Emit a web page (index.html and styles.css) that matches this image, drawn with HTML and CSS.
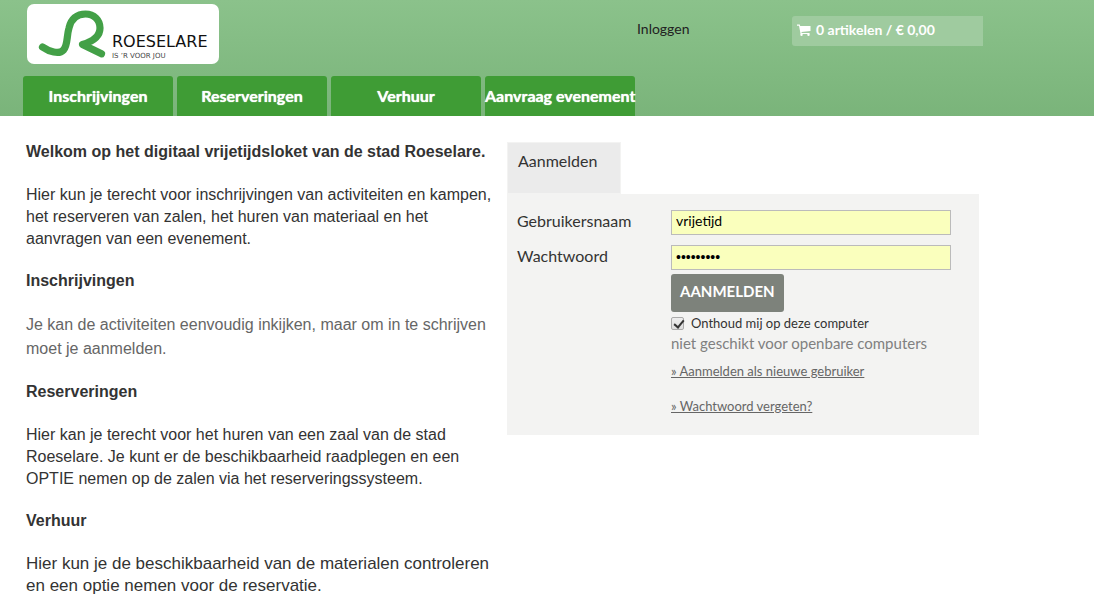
FILE: index.html
```html
<!DOCTYPE html>
<html lang="nl">
<head>
<meta charset="utf-8">
<meta name="viewport" content="width=device-width, initial-scale=1">
<title>Vrijetijdsloket Roeselare</title>
<link rel="stylesheet" href="styles.css">
</head>
<body>
<header class="header">
  <div class="topbar">
    <a class="logo" href="#" aria-label="Roeselare">
      <svg class="logo-svg" viewBox="0 0 192 60" width="192" height="60">
        <path d="M15.500 43C22 47.500 32 51 36.500 46C41 41 39.500 32 42 24C44 15 50 10 58.500 10C67 10 73 16 73 24C73 33 64 38 55.500 40.500L74.500 49.800" fill="none" stroke="#43a047" stroke-width="7.200" stroke-linecap="round" stroke-linejoin="round"/>
        <text class="logo-name" x="85" y="43">ROESELARE</text>
        <text class="logo-motto" x="85" y="54">IS ’R VOOR JOU</text>
      </svg>
    </a>
    <a class="login-link" href="#">Inloggen</a>
    <a class="cart" href="#">
      <svg class="cart-icon" viewBox="0 0 14 12" width="14" height="12">
        <path d="M0 .5h2.800l.4 1.500H13.500v5L4.500 8l.2.900H12.500v1H3.600L2 1.700H0z" fill="#fff"/>
        <circle cx="4.500" cy="10.800" r="1.200" fill="#fff"/>
        <circle cx="11.500" cy="10.800" r="1.200" fill="#fff"/>
      </svg>
      <span>0 artikelen / € 0,00</span>
    </a>
  </div>
  <nav class="nav">
    <a class="nav-item" href="#">Inschrijvingen</a>
    <a class="nav-item" href="#">Reserveringen</a>
    <a class="nav-item" href="#">Verhuur</a>
    <a class="nav-item" href="#">Aanvraag evenement</a>
  </nav>
</header>
<main class="main">
  <section class="intro">
    <h1 class="title">Welkom op het digitaal vrijetijdsloket van de stad Roeselare.</h1>
    <p class="text">Hier kun je terecht voor inschrijvingen van activiteiten en kampen, het reserveren van zalen, het huren van materiaal en het aanvragen van een evenement.</p>
    <h2 class="title">Inschrijvingen</h2>
    <p class="text text-muted">Je kan de activiteiten eenvoudig inkijken, maar om in te schrijven moet je aanmelden.</p>
    <h2 class="title">Reserveringen</h2>
    <p class="text">Hier kan je terecht voor het huren van een zaal van de stad Roeselare. Je kunt er de beschikbaarheid raadplegen en een OPTIE nemen op de zalen via het reserveringssysteem.</p>
    <h2 class="title">Verhuur</h2>
    <p class="text text-large">Hier kun je de beschikbaarheid van de materialen controleren en een optie nemen voor de reservatie.</p>
  </section>
  <section class="login">
    <h2 class="tab">Aanmelden</h2>
    <form class="panel">
      <label class="label" for="user">Gebruikersnaam</label>
      <input class="field" id="user" type="text" value="vrijetijd">
      <label class="label" for="pass">Wachtwoord</label>
      <input class="field field-password" id="pass" type="password" value="vrijetijd">
      <div class="actions">
        <button class="submit" type="button">AANMELDEN</button>
        <div class="remember">
          <input class="check" id="remember" type="checkbox" checked>
          <label for="remember">Onthoud mij op deze computer</label>
        </div>
        <p class="hint">niet geschikt voor openbare computers</p>
        <a class="link" href="#">» Aanmelden als nieuwe gebruiker</a>
        <a class="link" href="#">» Wachtwoord vergeten?</a>
      </div>
    </form>
  </section>
</main>
</body>
</html>
```

FILE: styles.css
```css
* { box-sizing: border-box; }

body {
  margin: 0;
  background: #fff;
  color: #333;
  font: 16px/22px Lato, sans-serif;
}

h1, h2, p { margin: 0; }

.header {
  padding: 4px 0 0 23px;
  background: linear-gradient(#8bc28b, #7ab47a);
}

.topbar {
  display: grid;
  grid-template-columns: 610px 155px minmax(150px, 191px);
  align-items: start;
  padding-left: 4px;
}

.logo {
  justify-self: start;
  display: block;
  background: #fff;
  border-radius: 7px;
}

.logo-svg { display: block; }
.logo-name { font: 16px "DejaVu Sans", sans-serif; fill: #111; }
.logo-motto { font: 7px "DejaVu Sans", sans-serif; fill: #444; }

.login-link {
  margin-top: 14px;
  color: #222;
  font-size: 14px;
  text-decoration: none;
}

.cart {
  display: flex;
  align-items: center;
  gap: 5px;
  margin-top: 12px;
  padding: 3px 5px 5px;
  border-radius: 3px 0 0 3px;
  background: #9fcb9f;
  color: #fff;
  font-size: 14px;
  font-weight: 700;
  text-decoration: none;
}

.nav {
  display: flex;
  gap: 4px;
  margin-top: 12px;
}

.nav-item {
  width: 150px;
  padding: 9px 0;
  border-radius: 3px 3px 0 0;
  background: #3f9c35;
  color: #fff;
  font-weight: 700;
  text-align: center;
  text-decoration: none;
  text-shadow: 0 0 1px #fff;
  white-space: nowrap;
}

.main {
  display: grid;
  grid-template-columns: minmax(0, 469px) minmax(0, 472px);
  gap: 12px;
  padding: 25px 26px 0;
}

.intro { font-family: "Liberation Sans", Arial, sans-serif; }

.title {
  margin-bottom: 21px;
  font-size: 16px;
  font-weight: 700;
}

.text { margin-bottom: 20px; }
.text:last-child { margin-bottom: 0; }
.text-muted { color: #666; line-height: 24px; }
.text-large { font-size: 17px; }

.login { padding-top: 1px; }

.tab {
  width: 114px;
  height: 52px;
  padding: 7px 10px;
  border: 1px solid #f3f3f2;
  background: #ebebeb;
  font-size: 16px;
  font-weight: 400;
}

.panel {
  display: grid;
  grid-template-columns: 144px minmax(0, 280px);
  column-gap: 10px;
  row-gap: 10px;
  padding: 16px 10px 18px;
  background: #f3f3f2;
}

.label { line-height: 22px; }

.field {
  width: 100%;
  height: 25px;
  padding: 0 4px 4px;
  border: 1px solid #bbb;
  border-radius: 0;
  background: #faffbd;
  color: #000;
  font: 14px Lato, sans-serif;
}

.field-password {
  padding-bottom: 1px;
  font-family: "Liberation Sans", Arial, sans-serif;
}

.actions {
  grid-column: 2;
  display: flex;
  flex-direction: column;
  align-items: flex-start;
  margin-top: -6px;
}

.submit {
  height: 38px;
  padding: 0 9px 4px;
  border: 0;
  border-radius: 3px;
  background: #7d827b;
  color: #fff;
  font: 700 15px Lato, sans-serif;
}

.remember {
  display: flex;
  align-items: center;
  gap: 7px;
  font-size: 13px;
}

.check {
  appearance: none;
  width: 13px;
  height: 13px;
  margin: 0;
  border: 1px solid #aaa;
  border-radius: 2px;
  background: linear-gradient(#eee, #ddd);
}

.check:checked::after {
  content: "";
  display: block;
  width: 4px;
  height: 8px;
  margin: 0 0 0 4px;
  border: solid #333;
  border-width: 0 2px 2px 0;
  transform: rotate(40deg);
}

.hint { color: #808080; font-size: 15px; line-height: 18px; }

.link {
  margin-top: 8px;
  color: #666;
  font-size: 13px;
}

.link + .link { margin-top: 13px; }
```
